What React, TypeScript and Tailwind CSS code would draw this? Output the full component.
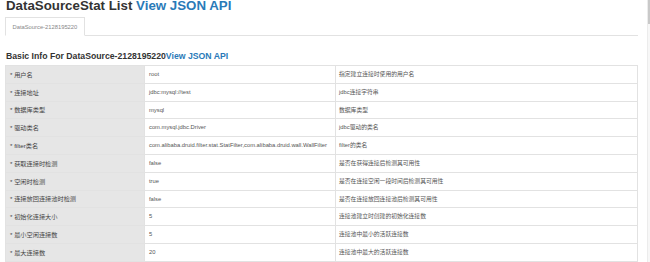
const rows: [string, string, string][] = [
  ["用户名", "root", "指定建立连接时使用的用户名"],
  ["连接地址", "jdbc:mysql://test", "jdbc连接字符串"],
  ["数据库类型", "mysql", "数据库类型"],
  ["驱动类名", "com.mysql.jdbc.Driver", "jdbc驱动的类名"],
  [
    "filter类名",
    "com.alibaba.druid.filter.stat.StatFilter,com.alibaba.druid.wall.WallFilter",
    "filter的类名",
  ],
  ["获取连接时检测", "false", "是否在获得连接后检测其可用性"],
  ["空闲时检测", "true", "是否在连接空闲一段时间后检测其可用性"],
  ["连接放回连接池时检测", "false", "是否在连接放回连接池后检测其可用性"],
  ["初始化连接大小", "5", "连接池建立时创建的初始化连接数"],
  ["最小空闲连接数", "5", "连接池中最小的活跃连接数"],
  ["最大连接数", "20", "连接池中最大的活跃连接数"],
];

export default function App() {
  return (
    <div className="relative h-[262px] overflow-hidden bg-white font-['Liberation_Sans','Noto_Sans_CJK_SC',sans-serif] text-[#333]">
      <div className="pl-[5px] pr-[12px]">
        <h1 className="-mt-[1.5px] pl-px text-[13.3px] font-bold leading-none">
          DataSourceStat List <a className="text-[#2a7ab8]">View JSON API</a>
        </h1>

        <div className="mt-[5.2px] flex border-b border-[#e2e2e2]">
          <div className="-mb-px h-[19px] border border-[#e2e2e2] border-b-white px-[6.5px] text-[5.8px] leading-[18px] text-[#888]">
            DataSource-2128195220
          </div>
        </div>

        <h3 className="mt-[15.5px] pl-px text-[8.7px] font-bold leading-[10px]">
          Basic Info For DataSource-2128195220<a className="text-[#2a7ab8]">View JSON API</a>
        </h3>

        <table className="mt-[3.5px] w-full border-collapse border border-[#e2e2e2] text-[5.8px]">
          <tbody>
            {rows.map(([name, value, desc]) => (
              <tr key={name} className="h-[17.8px]">
                <td className="w-[139px] border border-[#e2e2e2] bg-[#e6e6e6] pl-[4px] text-[6.2px] text-[#444]">
                  * {name}
                </td>
                <td className="w-[191px] border border-[#e2e2e2] pl-[4px] text-[#555]">{value}</td>
                <td className="border border-[#e2e2e2] pl-[3px] text-[#555]">{desc}</td>
              </tr>
            ))}
          </tbody>
        </table>
      </div>

      <div className="absolute right-0 top-0 h-full w-[3px] border-l border-[#ececec] bg-[#f7f7f7]">
        <div className="h-[24px] bg-[#c9c9c9]" />
      </div>
    </div>
  );
}
